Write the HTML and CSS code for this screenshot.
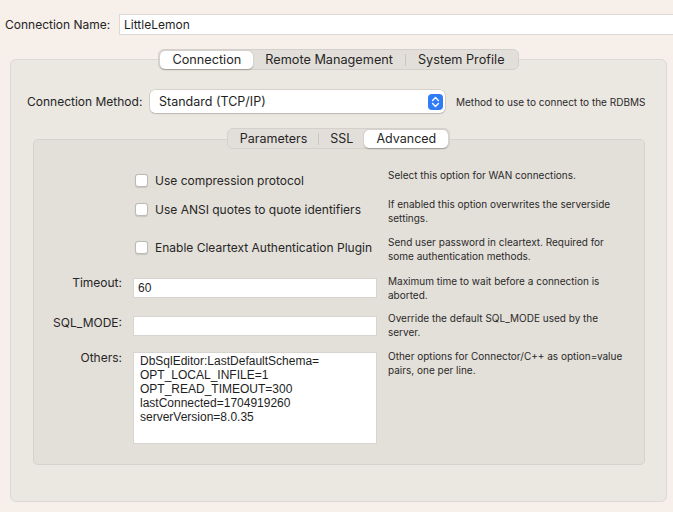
FILE: index.html
```html
<!DOCTYPE html>
<html>
<head>
<meta charset="utf-8">
<link rel="stylesheet" href="styles.css">
</head>
<body>
<div class="name-row">
  <label class="name-label">Connection Name:</label>
  <input class="name-input" type="text" value="LittleLemon">
</div>

<div class="tabs-wrap outer-tabs">
  <div class="segmented">
    <span class="seg active">Connection</span>
    <span class="seg">Remote Management</span>
    <span class="sep"></span>
    <span class="seg">System Profile</span>
  </div>
</div>

<div class="panel">
  <div class="method-row">
    <label class="method-label">Connection Method:</label>
    <div class="select">
      <span class="select-text">Standard (TCP/IP)</span>
      <svg class="stepper" width="15" height="16" viewBox="0 0 15 16">
        <rect x="0" y="0" width="15" height="16" rx="4" fill="#2f7cf6"/>
        <path d="M4.6 6.4 L7.5 3.6 L10.4 6.4" fill="none" stroke="#fff" stroke-width="1.4" stroke-linecap="round" stroke-linejoin="round"/>
        <path d="M4.6 9.6 L7.5 12.4 L10.4 9.6" fill="none" stroke="#fff" stroke-width="1.4" stroke-linecap="round" stroke-linejoin="round"/>
      </svg>
    </div>
    <span class="method-help">Method to use to connect to the RDBMS</span>
  </div>

  <div class="tabs-wrap inner-tabs">
    <div class="segmented">
      <span class="seg">Parameters</span>
      <span class="sep"></span>
      <span class="seg">SSL</span>
      <span class="seg active">Advanced</span>
    </div>
  </div>

  <div class="inner">
    <div class="row r1">
      <span></span>
      <div class="check"><span class="box"></span><span>Use compression protocol</span></div>
      <p class="help">Select this option for WAN connections.</p>
    </div>
    <div class="row r2">
      <span></span>
      <div class="check"><span class="box"></span><span>Use ANSI quotes to quote identifiers</span></div>
      <p class="help">If enabled this option overwrites the serverside settings.</p>
    </div>
    <div class="row r3">
      <span></span>
      <div class="check"><span class="box"></span><span>Enable Cleartext Authentication Plugin</span></div>
      <p class="help">Send user password in cleartext. Required for some authentication methods.</p>
    </div>
    <div class="row r4">
      <label class="flabel">Timeout:</label>
      <input class="field" type="text" value="60">
      <p class="help">Maximum time to wait before a connection is aborted.</p>
    </div>
    <div class="row r5">
      <label class="flabel">SQL_MODE:</label>
      <input class="field" type="text" value="">
      <p class="help">Override the default SQL_MODE used by the server.</p>
    </div>
    <div class="row r6">
      <label class="flabel">Others:</label>
      <textarea class="area">DbSqlEditor:LastDefaultSchema=
OPT_LOCAL_INFILE=1
OPT_READ_TIMEOUT=300
lastConnected=1704919260
serverVersion=8.0.35</textarea>
      <p class="help">Other options for Connector/C++ as option=value pairs, one per line.</p>
    </div>
  </div>
</div>
</body>
</html>
```

FILE: styles.css
```css
* { box-sizing: border-box; }

html, body {
  margin: 0;
  padding: 0;
}

body {
  width: 673px;
  height: 512px;
  overflow: hidden;
  background: #f6efea;
  font-family: Inter, "Noto Sans", sans-serif;
  font-size: 12px;
  color: #242424;
}

.name-row {
  display: flex;
  align-items: center;
  padding: 14px 0 0 5px;
}

.name-label {
  width: 114px;
  font-size: 12px;
}

.name-input {
  flex: 1;
  height: 21px;
  border: 1px solid #dcd8d3;
  border-right: none;
  background: #fff;
  padding: 0 4px;
  font-family: Inter, "Noto Sans", sans-serif;
  font-size: 12px;
  color: #1e1e1e;
  outline: none;
}

.tabs-wrap {
  display: flex;
  justify-content: center;
  margin-top: 14px;
  position: relative;
  z-index: 1;
}

.outer-tabs {
  padding-left: 4px;
}

.segmented {
  display: flex;
  align-items: center;
  height: 21px;
  padding: 1px;
  background: #e2ded9;
  border: 1px solid #d4d0cb;
  border-radius: 6px;
}

.seg {
  padding: 0 11px;
  line-height: 18px;
  font-size: 12.5px;
  color: #262626;
  white-space: nowrap;
}

.outer-tabs .seg {
  padding: 0 12px;
  font-size: 12.7px;
}

.seg.active {
  background: #fff;
  border-radius: 5px;
  box-shadow: 0 0.5px 1.5px rgba(0, 0, 0, 0.28);
  padding: 0 12px;
}

.outer-tabs .seg.active {
  padding: 0 12px;
}

.sep {
  width: 1px;
  height: 12px;
  background: #c9c5c0;
}

.panel {
  margin: -11px 6px 0 10px;
  height: 443px;
  background: #ebe7e1;
  border: 1px solid #dcd8d3;
  border-radius: 6px;
  padding-top: 30px;
}

.method-row {
  display: flex;
  align-items: center;
  padding-left: 16px;
}

.method-label {
  width: 123px;
  font-size: 12px;
}

.select {
  width: 295px;
  height: 23px;
  background: #fff;
  border-radius: 5px;
  box-shadow: 0 0 0 0.5px rgba(0, 0, 0, 0.18), 0 1px 1.5px rgba(0, 0, 0, 0.12);
  display: flex;
  align-items: center;
  justify-content: space-between;
  padding: 0 2px 0 9px;
}

.select-text {
  font-size: 12.5px;
  color: #1e1e1e;
}

.stepper {
  display: block;
}

.method-help {
  margin-left: 11px;
  font-size: 10px;
  color: #2a2a2a;
  white-space: nowrap;
}

.inner-tabs {
  margin-top: 15px;
}

.inner {
  margin: -10px 21px 0 22px;
  height: 326px;
  background: #e3dfd9;
  border: 1px solid #d6d2cd;
  border-radius: 5px;
  padding-top: 29px;
}

.row {
  display: grid;
  grid-template-columns: 88px 244px 238px;
  column-gap: 11px;
  align-items: start;
}

.r2 { margin-top: 8px; }
.r3 { margin-top: 11px; }
.r4 { margin-top: 12px; }
.r5 { margin-top: 10px; }
.r6 { margin-top: 11px; }

.check {
  display: flex;
  align-items: center;
  height: 20px;
  margin-top: 1px;
  padding-left: 2px;
  font-size: 12px;
  color: #262626;
  white-space: nowrap;
}

.box {
  width: 13px;
  height: 13px;
  background: #fff;
  border: 0.5px solid #bdb9b4;
  border-radius: 3px;
  box-shadow: 0 0.5px 1px rgba(0, 0, 0, 0.12);
  margin-right: 7px;
  flex: none;
}

.help {
  margin: 0;
  font-size: 10px;
  line-height: 13.5px;
  color: #2a2a2a;
}

.flabel {
  text-align: right;
  font-size: 12px;
  line-height: 14px;
  color: #262626;
}

.r4 .flabel { margin-top: 1px; }
.r5 .flabel { margin-top: 4px; }
.r6 .flabel { margin-top: 1px; }

.field {
  height: 20px;
  width: 244px;
  background: #fff;
  border: 1px solid #d8d4cf;
  padding: 0 4px;
  font-family: "Liberation Sans", Arial, sans-serif;
  font-size: 12px;
  color: #1e1e1e;
  outline: none;
}

.r4 .field { margin-top: 3px; }
.r5 .field { margin-top: 4px; }

.area {
  display: block;
  width: 244px;
  height: 92px;
  margin-top: 2px;
  background: #fff;
  border: 1px solid #d8d4cf;
  padding: 1px 6px 0;
  font-family: "Liberation Sans", Arial, sans-serif;
  font-size: 12px;
  line-height: 14px;
  color: #1e1e1e;
  resize: none;
  overflow: hidden;
  outline: none;
}
```
